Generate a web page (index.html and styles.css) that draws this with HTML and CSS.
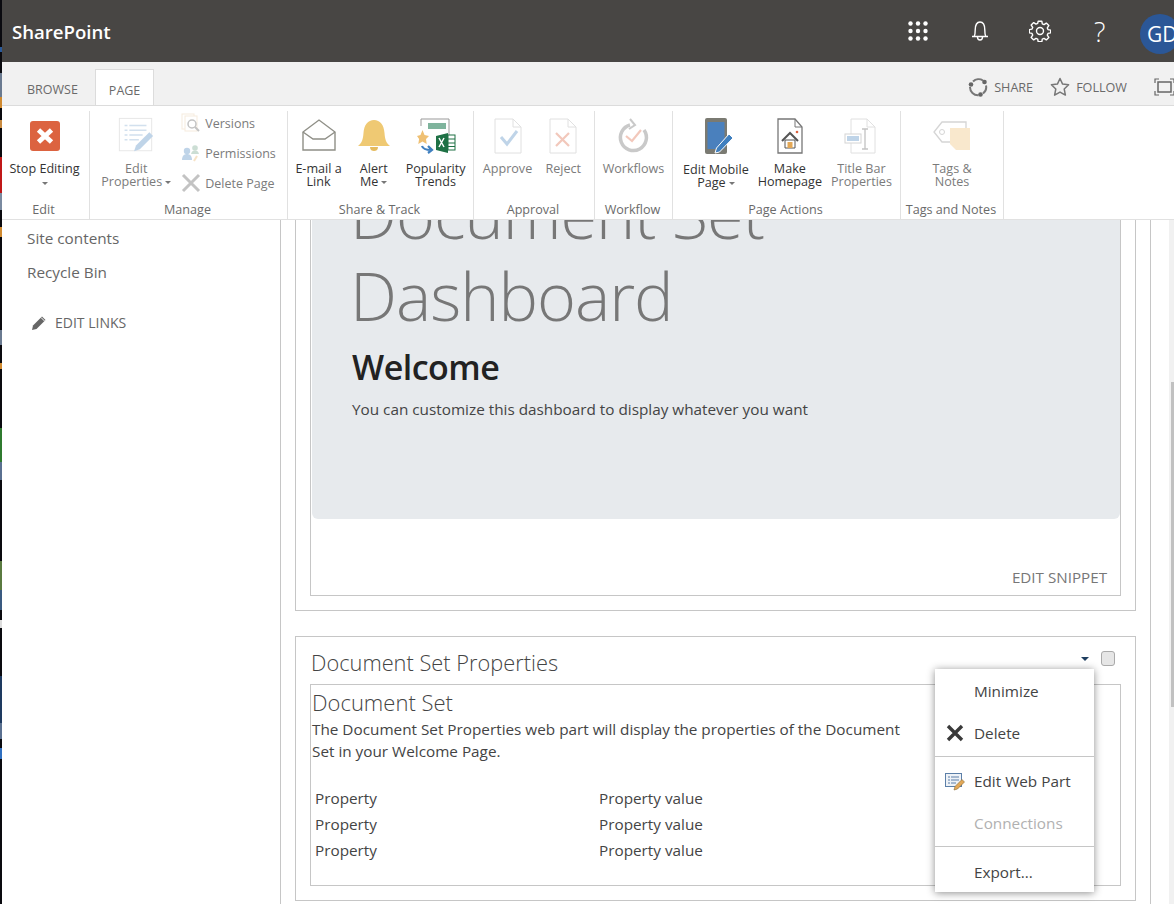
FILE: index.html
```html
<!DOCTYPE html>
<html lang="en">
<head>
    <meta charset="UTF-8">
    <meta name="viewport" content="width=device-width, initial-scale=1.0">
    <title>Document Set Dashboard</title>
    <link rel="stylesheet" href="styles.css">
</head>
<body>
    <div class="desk-edge"></div>

    <div class="app">
        <header class="suite-bar">
            <div class="brand">SharePoint</div>
            <div class="suite-icons">
                <svg class="suite-icon waffle" width="20" height="20" viewBox="0 0 20 20" fill="#fff">
                    <circle cx="2.5" cy="2.5" r="2.2"/><circle cx="10" cy="2.5" r="2.2"/><circle cx="17.5" cy="2.5" r="2.2"/>
                    <circle cx="2.5" cy="10" r="2.2"/><circle cx="10" cy="10" r="2.2"/><circle cx="17.5" cy="10" r="2.2"/>
                    <circle cx="2.5" cy="17.5" r="2.2"/><circle cx="10" cy="17.5" r="2.2"/><circle cx="17.5" cy="17.5" r="2.2"/>
                </svg>
                <svg class="suite-icon bell" width="18" height="20" viewBox="0 0 18 20" fill="none" stroke="#fff" stroke-width="1.4">
                    <path d="M1 15.5h16M3.2 15.5c.8-1.5 1-3 1-6.5C4.200 4 6 1 9 1s4.800 3 4.800 8c0 3.500.2 5 1 6.500"/>
                    <path d="M6.500 16c0 2 1.100 3 2.500 3s2.500-1 2.500-3"/>
                </svg>
                <svg class="suite-icon gear" width="22" height="22" viewBox="0 0 22 22" fill="none" stroke="#fff" stroke-width="1.4" stroke-linejoin="round">
                    <path d="M9.200 1.200h3.600l.5 2.700 1.700.7 2.300-1.500 2.500 2.500-1.500 2.300.7 1.700 2.700.5v2.800l-2.700.5-.7 1.700 1.500 2.300-2.500 2.500-2.300-1.500-1.700.7-.5 2.700H9.200l-.5-2.700-1.700-.7-2.300 1.500-2.500-2.500 1.500-2.300-.7-1.700-2.700-.5V9.600l2.700-.5.7-1.700-1.500-2.300 2.500-2.500L7 4.100l1.700-.7z"/>
                    <circle cx="11" cy="11" r="3.500"/>
                </svg>
                <span class="help">?</span>
                <span class="avatar">GD</span>
            </div>
        </header>

        <nav class="ribbon-tabs">
            <span class="tab">BROWSE</span>
            <span class="tab tab-active">PAGE</span>
            <div class="tab-actions">
                <svg width="20" height="20" viewBox="0 0 20 20" fill="none" stroke="#777" stroke-width="2">
                    <path d="M5 4.500A8 8 0 0 1 15 3.500M18 8.500a8 8 0 0 1-3 8M10.500 18.200A8 8 0 0 1 2 10"/>
                    <circle cx="3" cy="7.500" r="2.300" fill="#666" stroke="none"/>
                    <circle cx="16.500" cy="5" r="2.300" fill="#666" stroke="none"/>
                    <circle cx="12.500" cy="17.500" r="2.300" fill="#666" stroke="none"/>
                </svg>
                <span class="tab-action-text">SHARE</span>
                <svg class="follow-icon" width="20" height="20" viewBox="0 0 20 20" fill="none" stroke="#777" stroke-width="1.500" stroke-linejoin="round">
                    <path d="M10 1.500l2.600 5.600 6 .7-4.400 4.200 1.200 6.100L10 15.100l-5.400 3 1.200-6.100L1.400 7.800l6-.7z"/>
                </svg>
                <span class="tab-action-text">FOLLOW</span>
                <svg class="focus-icon" width="21" height="18" viewBox="0 0 21 18" fill="none" stroke="#666" stroke-width="1.200">
                    <path d="M1 5V1h4M16 1h4v4M1 13v4h4M16 17h4v-4"/>
                    <rect x="4" y="4" width="13" height="10" stroke-width="1.500"/>
                </svg>
            </div>
        </nav>

        <section class="ribbon">
            <div class="group group-edit">
                <div class="group-items">
                    <div class="big-btn">
                        <svg class="big-icon" width="36" height="36" viewBox="0 0 36 36">
                            <rect x="3" y="3" width="30" height="30" rx="3" fill="#dc6340"/>
                            <path d="M11.500 12l13 12M24.500 12l-13 12" stroke="#fff" stroke-width="4.800"/>
                        </svg>
                        <span class="big-label">Stop Editing</span>
                        <span class="caret caret-alone"></span>
                    </div>
                </div>
                <div class="group-label">Edit</div>
            </div>

            <div class="group group-manage">
                <div class="group-items">
                    <div class="big-btn is-off">
                        <svg class="big-icon" width="40" height="40" viewBox="0 0 40 40">
                            <rect x="2.500" y="1.500" width="34" height="34" fill="#fff" stroke="#bbb"/>
                            <path d="M8 9h3M13 9h18M8 14h3M13 14h18M8 19h3M13 19h14M8 24h3M13 24h10" stroke="#7fa8d0" stroke-width="1.500"/>
                            <path d="M18 36l2-6 14-14 4 4-14 14z" fill="#4a86c0"/>
                        </svg>
                        <span class="big-label">Edit<br>Properties<span class="caret"></span></span>
                    </div>
                    <div class="small-stack">
                        <div class="small-btn is-off">
                            <svg width="20" height="20" viewBox="0 0 20 20" fill="none">
                                <rect x="1" y="1" width="12" height="15" stroke="#e8c9a0"/>
                                <rect x="4" y="3" width="12" height="15" fill="#fff" stroke="#e8c9a0"/>
                                <circle cx="11" cy="11" r="4" stroke="#555" stroke-width="1.500"/>
                                <path d="M14 14l4 4" stroke="#555" stroke-width="2"/>
                            </svg>
                            <span>Versions</span>
                        </div>
                        <div class="small-btn is-off">
                            <svg width="20" height="20" viewBox="0 0 20 20">
                                <circle cx="6" cy="8" r="3.200" fill="#4a86c0"/>
                                <path d="M1 17c0-4 2-6 5-6s5 2 5 6z" fill="#4a86c0"/>
                                <circle cx="14" cy="5" r="2.800" fill="#6fa287"/>
                                <path d="M10 11c.5-2.500 2-3.500 4-3.500s3.500 1 4 3.500z" fill="#6fa287"/>
                                <path d="M13 18l3-5" stroke="#e8b060" stroke-width="2"/>
                            </svg>
                            <span>Permissions</span>
                        </div>
                        <div class="small-btn is-off">
                            <svg width="20" height="20" viewBox="0 0 20 20">
                                <path d="M2 2l16 16M18 2L2 18" stroke="#555" stroke-width="3"/>
                            </svg>
                            <span>Delete Page</span>
                        </div>
                    </div>
                </div>
                <div class="group-label">Manage</div>
            </div>

            <div class="group group-share">
                <div class="group-items items-share">
                    <div class="big-btn">
                        <svg class="big-icon" width="36" height="36" viewBox="0 0 36 36" fill="none" stroke="#8f8f87" stroke-width="1.400">
                            <path d="M2 14L18 2l16 12v18H2z" fill="#fff"/>
                            <path d="M2 14l10 7h12l10-7"/>
                        </svg>
                        <span class="big-label">E-mail a<br>Link</span>
                    </div>
                    <div class="big-btn">
                        <svg class="big-icon" width="36" height="36" viewBox="0 0 36 36" fill="#efc973">
                            <path d="M2 28c4-3 5-7 5.500-13C8 7 12 2 18 2s10 5 10.500 13c.5 6 1.500 10 5.500 13z"/>
                            <path d="M14 29c0 3 2 4 4 4s4-1 4-4z" fill="#e5bb5e"/>
                        </svg>
                        <span class="big-label">Alert<br>Me<span class="caret"></span></span>
                    </div>
                    <div class="big-btn">
                        <svg class="big-icon" width="40" height="36" viewBox="0 0 40 36">
                            <path d="M5 8V1h28v24H20" fill="#fff" stroke="#999"/>
                            <rect x="12" y="5" width="18" height="6" fill="#7fb49d"/>
                            <path d="M1 18l3.500-1 2-5 2 5 4.500 1-3 3 .7 5-4.200-2.500L2.300 26l.8-5z" fill="#efc073"/>
                            <path d="M6 28c1 3 4 4 9 4M12 28l4 4-4 3" fill="none" stroke="#3f7fbf" stroke-width="2.200"/>
                            <path d="M20 18l12-3v20l-12-3z" fill="#1e7145"/>
                            <rect x="32" y="17" width="7" height="15" fill="#fff" stroke="#1e7145"/>
                            <path d="M23 20l5 9M28 20l-5 9" stroke="#fff" stroke-width="1.500"/>
                            <path d="M32 21h7M32 25h7M32 28.500h7" stroke="#1e7145"/>
                        </svg>
                        <span class="big-label">Popularity<br>Trends</span>
                    </div>
                </div>
                <div class="group-label">Share &amp; Track</div>
            </div>

            <div class="group group-approval">
                <div class="group-items items-approval">
                    <div class="big-btn is-off">
                        <svg class="big-icon" width="36" height="36" viewBox="0 0 36 36" fill="none">
                            <path d="M5 1h18l8 8v26H5z" fill="#fff" stroke="#aaa"/>
                            <path d="M23 1v8h8" stroke="#aaa"/>
                            <path d="M11 19l6 7 10-13" stroke="#4a86c0" stroke-width="3"/>
                        </svg>
                        <span class="big-label">Approve</span>
                    </div>
                    <div class="big-btn is-off">
                        <svg class="big-icon" width="36" height="36" viewBox="0 0 36 36" fill="none">
                            <path d="M5 1h18l8 8v26H5z" fill="#fff" stroke="#aaa"/>
                            <path d="M23 1v8h8" stroke="#aaa"/>
                            <path d="M11 15l13 13M24 15L11 28" stroke="#dc6340" stroke-width="2.200"/>
                        </svg>
                        <span class="big-label">Reject</span>
                    </div>
                </div>
                <div class="group-label">Approval</div>
            </div>

            <div class="group group-workflow">
                <div class="group-items">
                    <div class="big-btn is-off">
                        <svg class="big-icon" width="36" height="36" viewBox="0 0 36 36" fill="none">
                            <path d="M15 7a13 13 0 1 0 14 5" stroke="#666" stroke-width="3.500"/>
                            <path d="M15 1l5 6-6 4" stroke="#666" stroke-width="2"/>
                            <path d="M11 18l6 5 9-11" stroke="#dc6340" stroke-width="2.200"/>
                        </svg>
                        <span class="big-label">Workflows</span>
                    </div>
                </div>
                <div class="group-label">Workflow</div>
            </div>

            <div class="group group-actions">
                <div class="group-items items-actions">
                    <div class="big-btn">
                        <svg class="big-icon" width="36" height="38" viewBox="0 0 36 38">
                            <rect x="7" y="1" width="22" height="36" rx="2" fill="#7a7a72"/>
                            <rect x="9.500" y="5" width="17" height="27" fill="#4a80bd"/>
                            <path d="M17 36l1.500-5L31 17l4 4-13.500 14z" fill="#3f7fbf" stroke="#fff"/>
                        </svg>
                        <span class="big-label label-low">Edit Mobile<br>Page<span class="caret"></span></span>
                    </div>
                    <div class="big-btn">
                        <svg class="big-icon" width="36" height="36" viewBox="0 0 36 36" fill="none">
                            <path d="M6 1h17l7 8v26H6z" fill="#fff" stroke="#777" stroke-width="1.300"/>
                            <path d="M23 1v8h7" stroke="#777"/>
                            <path d="M10 23l8-8 8 8" stroke="#555" stroke-width="2"/>
                            <path d="M13 22h10v8H13z" fill="#fff" stroke="#555"/>
                            <rect x="15.500" y="24" width="5" height="6" fill="#e3a857"/>
                            <circle cx="25" cy="14" r="1.300" fill="#dc6340"/>
                        </svg>
                        <span class="big-label">Make<br>Homepage</span>
                    </div>
                    <div class="big-btn is-off">
                        <svg class="big-icon" width="36" height="36" viewBox="0 0 36 36" fill="none">
                            <path d="M8 1h16l8 8v26H8z" fill="#fff" stroke="#aaa"/>
                            <path d="M24 1v8h8" stroke="#aaa"/>
                            <rect x="2" y="16" width="16" height="9" fill="#fff" stroke="#888"/>
                            <rect x="4" y="18" width="12" height="5" fill="#4a86c0"/>
                            <path d="M19 11h6M22 11v20M19 31h6" stroke="#555" stroke-width="1.300"/>
                        </svg>
                        <span class="big-label">Title Bar<br>Properties</span>
                    </div>
                </div>
                <div class="group-label">Page Actions</div>
            </div>

            <div class="group group-tags">
                <div class="group-items">
                    <div class="big-btn is-off">
                        <svg class="big-icon" width="40" height="36" viewBox="0 0 40 36" fill="none">
                            <path d="M10 4h24v20H10L2 14z" fill="#fff" stroke="#888" stroke-width="1.300"/>
                            <circle cx="10" cy="14" r="2.500" stroke="#888"/>
                            <path d="M18 10h20v22H24l-6-6z" fill="#efc073"/>
                        </svg>
                        <span class="big-label">Tags &amp;<br>Notes</span>
                    </div>
                </div>
                <div class="group-label">Tags and Notes</div>
            </div>
        </section>

        <div class="workspace">
            <aside class="side-nav">
                <a class="nav-link">Site contents</a>
                <a class="nav-link">Recycle Bin</a>
                <a class="edit-links">
                    <svg width="16" height="16" viewBox="0 0 16 16">
                        <path d="M1 15l1-4.500L11 1.500l3.500 3.500L5.500 14z" fill="#666"/>
                        <path d="M10 2.500l3.500 3.500" stroke="#fff"/>
                    </svg>
                    EDIT LINKS
                </a>
            </aside>

            <main class="page-area">
                <div class="zone zone-first">
                    <div class="box">
                        <div class="hero">
                            <h1 class="hero-title">Document Set<br>Dashboard</h1>
                            <h2 class="hero-welcome">Welcome</h2>
                            <p class="hero-text">You can customize this dashboard to display whatever you want</p>
                        </div>
                        <div class="edit-snippet">EDIT SNIPPET</div>
                    </div>
                </div>

                <div class="zone zone-props">
                    <div class="part-head">
                        <span class="part-title">Document Set Properties</span>
                        <span class="part-arrow"></span>
                        <span class="part-check"></span>
                    </div>
                    <div class="box props-box">
                        <div class="props-title">Document Set</div>
                        <p class="props-desc">The Document Set Properties web part will display the properties of the Document Set in your Welcome Page.</p>
                        <table class="props-table">
                            <tr><td>Property</td><td>Property value</td></tr>
                            <tr><td>Property</td><td>Property value</td></tr>
                            <tr><td>Property</td><td>Property value</td></tr>
                        </table>
                    </div>

                    <ul class="part-menu">
                        <li class="menu-item">Minimize</li>
                        <li class="menu-item">
                            <svg class="menu-icon" width="20" height="18" viewBox="0 0 20 18">
                                <path d="M3 2l14 14M17 2L3 16" stroke="#3a3a3a" stroke-width="3.400"/>
                            </svg>
                            Delete
                        </li>
                        <li class="menu-sep"></li>
                        <li class="menu-item">
                            <svg class="menu-icon" width="20" height="20" viewBox="0 0 20 20">
                                <rect x="0.500" y="1.500" width="16" height="13" fill="#eef2f7" stroke="#5c7fa8"/>
                                <path d="M3 5h2M6 5h8M3 8h2M6 8h8M3 11h2M6 11h5" stroke="#5c7fa8"/>
                                <path d="M9 18l1-3.500 7-7 2.500 2.500-7 7z" fill="#e3a857" stroke="#8a6a30" stroke-width=".6"/>
                            </svg>
                            Edit Web Part
                        </li>
                        <li class="menu-item menu-item-off">Connections</li>
                        <li class="menu-sep"></li>
                        <li class="menu-item menu-item-last">Export...</li>
                    </ul>
                </div>
            </main>

            <div class="page-gutter"></div>
            <div class="scroll-track"><div class="scroll-thumb"></div></div>
        </div>
    </div>
</body>
</html>
```

FILE: styles.css
```css
* {
    box-sizing: border-box;
}

html, body {
    height: 100%;
}

body {
    margin: 0;
    display: flex;
    overflow: hidden;
    background: #fff;
    color: #444;
    font-family: "Open Sans", "Noto Sans", sans-serif;
    font-size: 15.3px;
}

/* sliver of the desktop showing behind the browser window */
.desk-edge {
    flex: 0 0 2px;
    background: linear-gradient(#0a0a0f 0 47px, #2a5a9a 47px 52px, #0a0a0f 52px 73px, #6a7a90 73px 97px, #d08a30 97px 108px, #0a0a0f 108px 120px, #c88a40 120px 128px, #0a0a0f 128px 157px, #c01818 157px 193px, #7a8aa0 193px 210px, #0a0a0f 210px 227px, #d08a30 227px 237px, #0a0a0f 237px 330px, #6a7a90 330px 345px, #0a0a0f 345px 363px, #d08a30 363px 369px, #0a0a0f 369px 428px, #2f7a2f 428px 462px, #5a7090 462px 480px, #0a0a0f 480px 561px, #5a7a40 561px 590px, #3a5a80 590px 610px, #0a0a0f 610px 620px, #ddd 620px 628px, #0a0a0f 628px 676px, #1e3a60 676px 723px, #5a7090 723px 739px, #0a0a0f 739px 748px, #2f6fc0 748px 759px, #0a0a0f 759px);
}

.app {
    flex: 1;
    min-width: 0;
    display: flex;
    flex-direction: column;
    height: 904px;
    overflow: hidden;
}

/* top bar */
.suite-bar {
    flex: 0 0 62px;
    display: flex;
    align-items: center;
    justify-content: space-between;
    background: #484644;
    color: #fff;
}

.brand {
    padding-left: 10px;
    font-size: 18.6px;
    font-weight: 600;
}

.suite-icons {
    display: flex;
    align-items: center;
    overflow: hidden;
    height: 62px;
    width: 266px;
}

.suite-icon {
    flex: none;
}

.bell {
    margin-left: 43px;
}

.gear {
    margin-left: 40px;
}

.help {
    flex: none;
    width: 14px;
    margin-left: 43px;
    font-size: 27px;
    font-weight: 300;
}

.avatar {
    flex: none;
    width: 40px;
    height: 40px;
    margin-left: 32px;
    margin-top: 6px;
    padding-left: 7px;
    border-radius: 50%;
    background: #2b5797;
    font-size: 21px;
    line-height: 40px;
}

/* tabs */
.ribbon-tabs {
    flex: 0 0 44px;
    display: flex;
    align-items: flex-end;
    padding-left: 9px;
    background: #f1f1f1;
    border-bottom: 1px solid #dcdcdc;
    overflow: hidden;
}

.tab {
    height: 37px;
    margin-bottom: -1px;
    padding: 0 16px;
    color: #6a6a6a;
    font-size: 12.5px;
    line-height: 41px;
}

.tab-active {
    margin-left: 1px;
    padding: 0 13px;
    background: #fff;
    border: 1px solid #dcdcdc;
    border-bottom: 0;
}

.tab-actions {
    display: flex;
    align-items: center;
    margin-left: auto;
    height: 36px;
}

.tab-action-text {
    margin-left: 6px;
    color: #6a6a6a;
    font-size: 12.6px;
}

.follow-icon {
    margin-left: 17px;
}

.focus-icon {
    flex: none;
    margin-left: 27px;
    margin-right: -1px;
}

/* ribbon */
.ribbon {
    flex: 0 0 114px;
    display: flex;
    background: #fff;
    border-bottom: 1px solid #e1e1e1;
    padding-top: 5px;
}

.group {
    display: flex;
    flex-direction: column;
    border-right: 1px solid #e1e1e1;
}

.group-edit { width: 88px; padding-right: 2px; }
.group-manage { width: 198px; }
.group-share { width: 186px; }
.group-approval { width: 121px; }
.group-workflow { width: 78px; }
.group-actions { width: 228px; }
.group-tags { width: 103px; }

.group-items {
    flex: 1;
    display: flex;
    justify-content: center;
    gap: 10px;
}

.items-share {
    gap: 14px;
}

.items-approval {
    gap: 13px;
    padding-right: 4px;
}

.items-actions {
    gap: 9px;
    padding-left: 2px;
}

.group-label {
    height: 20px;
    padding-right: 2px;
    color: #6a6a6a;
    font-size: 12.6px;
    line-height: 21px;
    text-align: center;
    white-space: nowrap;
}

.big-btn {
    display: flex;
    flex-direction: column;
    align-items: center;
    color: #333;
    font-size: 12.6px;
    line-height: 13px;
    text-align: center;
    white-space: nowrap;
}

.big-icon {
    flex: none;
    height: 38px;
    margin: 6px 0 7px;
}

.big-label {
    display: block;
}

.label-low {
    margin-top: 1px;
}

.is-off {
    color: #7b7b7b;
}

.is-off svg {
    opacity: 0.35;
}

.caret {
    display: inline-block;
    margin-left: 3px;
    vertical-align: middle;
    border-top: 3px solid #777;
    border-left: 3px solid transparent;
    border-right: 3px solid transparent;
}

.caret-alone {
    margin: 7px 0 0;
}

.small-stack {
    display: flex;
    flex-direction: column;
    gap: 10px;
    padding-top: 2px;
}

.small-btn {
    display: flex;
    align-items: center;
    gap: 4px;
    height: 20px;
    font-size: 12.5px;
    white-space: nowrap;
}

/* below the ribbon */
.workspace {
    flex: 1;
    min-height: 0;
    display: flex;
}

.side-nav {
    flex: 0 0 279px;
    display: flex;
    flex-direction: column;
    padding: 7px 0 0 25px;
    border-right: 1px solid #c6c6c6;
    color: #666;
}

.nav-link {
    height: 34px;
    line-height: 22px;
}

.edit-links {
    display: flex;
    align-items: center;
    gap: 8px;
    margin: 18px 0 0 4px;
    font-size: 14px;
}

.page-area {
    flex: 0 0 870px;
    position: relative;
    overflow: hidden;
    border-right: 1px solid #c6c6c6;
}

.page-gutter {
    flex: 0 0 18px;
}

.scroll-track {
    flex: 0 0 5px;
    padding-top: 162px;
    padding-left: 2px;
    background: #f1f1f1;
}

.scroll-thumb {
    height: 325px;
    background: #c1c1c1;
}

.zone {
    margin: 0 14px;
    padding: 0 14px 14px;
    border: 1px solid #c6c6c6;
}

.zone-first {
    margin-top: -100px;
    border-top: 0;
}

.zone-props {
    position: relative;
    margin-top: 25px;
    height: 265px;
}

.box {
    border: 1px solid #c6c6c6;
}

.zone-first .box {
    border-top: 0;
}

.hero {
    height: 399px;
    margin-left: 1px;
    padding: 52px 40px 0;
    background: #e7eaed;
    border-radius: 0 0 6px 6px;
}

.hero-title {
    margin: 0 0 0 -2px;
    color: #777;
    font-size: 66.5px;
    font-weight: 300;
    line-height: 82px;
    letter-spacing: -1px;
}

.hero-welcome {
    margin: 9px 0 0;
    color: #222;
    font-size: 34px;
    font-weight: 600;
    line-height: 44px;
    letter-spacing: -0.5px;
}

.hero-text {
    margin: 10px 0 0;
}

.edit-snippet {
    height: 76px;
    padding: 48px 13px 0 0;
    color: #777;
    font-size: 15.2px;
    text-align: right;
}

.part-head {
    display: flex;
    align-items: center;
    height: 47px;
    padding-top: 4px;
}

.part-title {
    flex: 1;
    padding-left: 1px;
    font-size: 21.8px;
    font-weight: 300;
}

.part-arrow {
    margin-right: 12px;
    margin-top: -8px;
    border-top: 4px solid #1f3f60;
    border-left: 4px solid transparent;
    border-right: 4px solid transparent;
}

.part-check {
    width: 14px;
    height: 15px;
    margin-right: 6px;
    margin-top: -9px;
    background: #e6e6e6;
    border: 1px solid #aaa;
    border-radius: 3px;
}

.props-box {
    height: 202px;
    padding: 2px 1px;
}

.props-title {
    font-size: 22px;
    font-weight: 300;
    line-height: 30px;
}

.props-desc {
    width: 600px;
    margin: 1px 0 0;
    line-height: 22px;
}

.props-table {
    margin-top: 23px;
    border-collapse: collapse;
}

.props-table td {
    height: 26px;
    padding: 0 0 0 3px;
}

.props-table td:first-child {
    width: 284px;
}

/* web part dropdown */
.part-menu {
    position: absolute;
    top: 32px;
    left: 639px;
    width: 159px;
    margin: 0;
    padding: 1px 0 0;
    list-style: none;
    background: #fff;
    box-shadow: 0 1px 8px rgba(0, 0, 0, 0.45);
}

.menu-item {
    position: relative;
    height: 42px;
    padding-left: 39px;
    color: #444;
    line-height: 42px;
}

.menu-item-off {
    color: #b1b1b1;
}

.menu-item-last {
    line-height: 44px;
}

.menu-icon {
    position: absolute;
    left: 10px;
    top: 12px;
}

.menu-sep {
    height: 1px;
    margin: 2px 0 3px;
    background: #c6c6c6;
}
```
